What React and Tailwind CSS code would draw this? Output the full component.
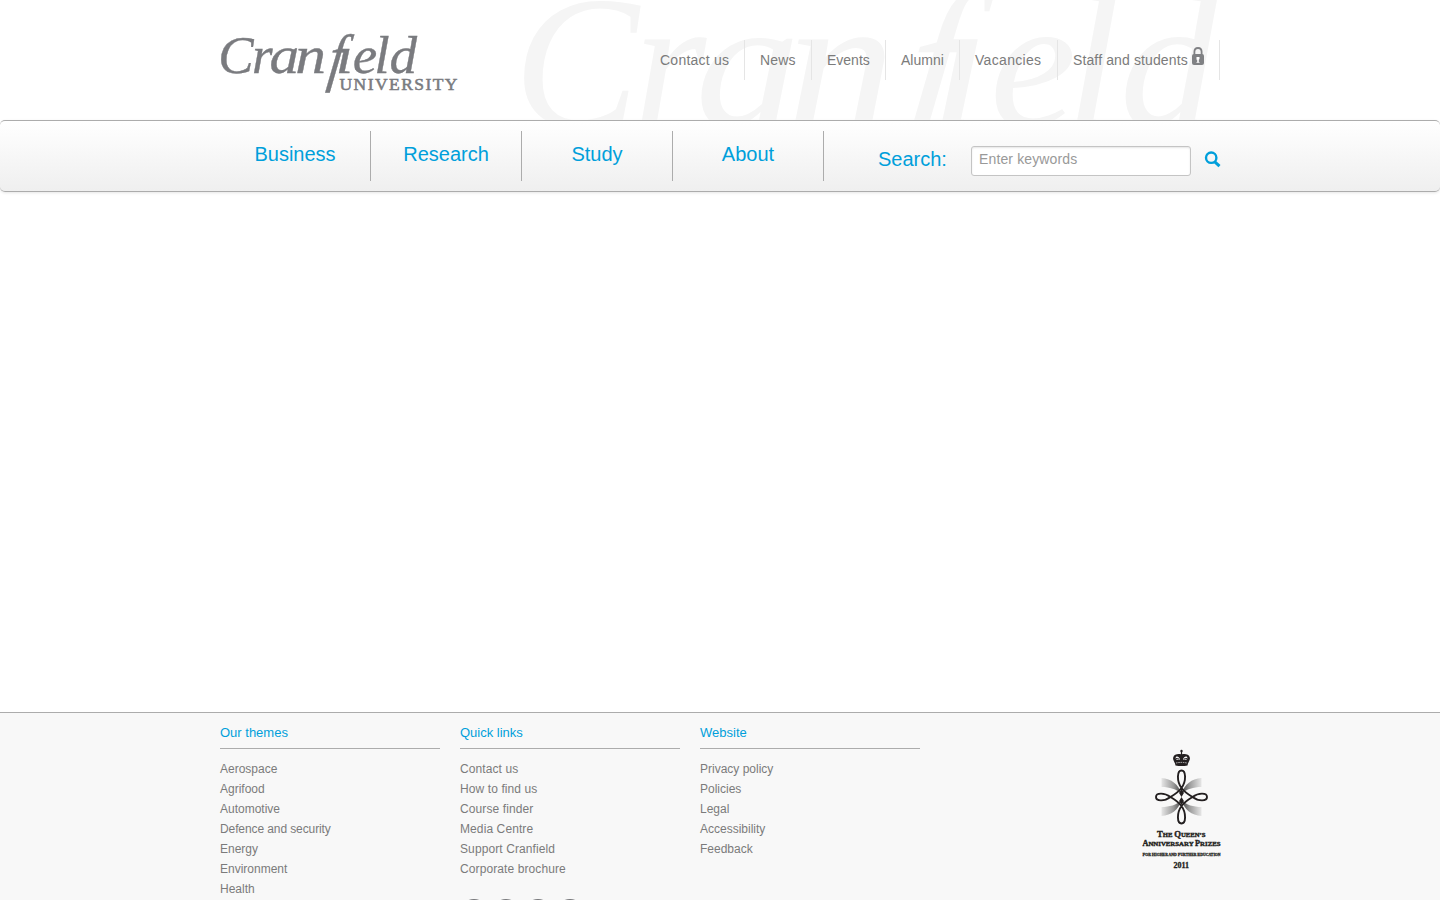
const TOP = [
  ['Contact us', 'w-[69px] tracking-[0.24px]'],
  ['News', 'w-[36px] tracking-[0.2px]'],
  ['Events', 'w-[43px]'],
  ['Alumni', 'w-[43px]'],
  ['Vacancies', 'w-[67px] tracking-[0.32px]'],
];
const MAIN = ['Business', 'Research', 'Study', 'About'];
const COLUMNS = [
  ['Our themes', ['Aerospace', 'Agrifood', 'Automotive', 'Defence and security', 'Energy', 'Environment', 'Health']],
  ['Quick links', ['Contact us', 'How to find us', 'Course finder', 'Media Centre', 'Support Cranfield', 'Corporate brochure']],
  ['Website', ['Privacy policy', 'Policies', 'Legal', 'Accessibility', 'Feedback']],
];
const SERIF = "'Liberation Serif', serif";

// letter, x, baseline, horizontal stretch, font size, extra slant
const LETTERS = [
  ['C', -1.8, 73, 1, 53, 0],
  ['r', 32, 73, 1, 53, 0],
  ['a', 49.5, 73, 1.12, 53, 0],
  ['n', 75.3, 73, 1.16, 53, 0],
  ['f', 106.5, 78.8, 0.86, 64, -8],
  ['i', 115.5, 73, 1.2, 53, 0],
  ['e', 132.7, 73, 1.04, 53, 0],
  ['l', 154.2, 73, 1.05, 53, 0],
  ['d', 169.4, 73, 1.04, 53, 0],
];

function Wordmark({ id }) {
  return (
    <g fontFamily={SERIF} fontStyle="italic">
      <clipPath id={id}>
        <rect x="0" y="-25.500" width="40" height="40" />
      </clipPath>
      {LETTERS.map(([letter, x, y, stretch, size, slant]) => (
        <g key={letter} transform={`translate(${x} ${y}) skewX(${slant}) scale(${stretch} 1)`}>
          <text fontSize={size} clipPath={letter === 'i' ? `url(#${id})` : undefined}>{letter}</text>
        </g>
      ))}
    </g>
  );
}

function Watermark() {
  return (
    <svg className="pointer-events-none absolute left-[300px] top-0" width="720" height="120" viewBox="0 0 720 120" fill="#f5f5f5" aria-hidden="true">
      <g transform="translate(0 -132.4) scale(3.54)">
        <Wordmark id="dot-large" />
      </g>
    </svg>
  );
}

function Logo() {
  return (
    <svg width="240" height="120" viewBox="0 0 240 120" fill="#7a7b7f">
      <g stroke="#7a7b7f" strokeWidth="0.35">
        <Wordmark id="dot-small" />
        <text x="119.500" y="90" textLength="118" lengthAdjust="spacing" fontFamily={SERIF} fontSize="17.500" strokeWidth="0.550">
          UNIVERSITY
        </text>
      </g>
    </svg>
  );
}

function Lock() {
  return (
    <svg className="-mr-px ml-auto mt-[7px]" width="14" height="18" viewBox="0 0 14 18">
      <path d="M3.400 8V4.800C3.400 2.300 5 1 7 1s3.600 1.300 3.600 3.800V8" fill="none" stroke="#808184" strokeWidth="1.800" />
      <rect x="1" y="7" width="12" height="11" rx="2" fill="#808184" />
      <path d="M5.500 10h3v2l-.7.7V15h.7v.8h-3V15h.7v-2.300h-.7z" fill="#fff" />
    </svg>
  );
}

function Crest() {
  return (
    <svg width="79" height="124" viewBox="0 0 79 124" fill="#231f20">
      <defs>
        <linearGradient id="sweep" x1="0" x2="1">
          <stop offset="0" stopColor="#e6e6e6" />
          <stop offset="0.600" stopColor="#9a9a9a" />
          <stop offset="1" stopColor="#444444" />
        </linearGradient>
        <path id="ray" d="M-20 -19C-10 -18 -3 -13 0 -3C-5 -8 -12 -10 -20 -10z" fill="url(#sweep)" />
      </defs>
      <g transform="translate(39.500 0)">
        <circle cy="5" r="1.200" />
        <path d="M-.6 5h1.200v4h-1.200z" />
        <path d="M-6 19.500C-6.500 16-9 14-8.300 11.500C-7.500 8-3 7.500 0 8.500C3 7.500 7.500 8 8.300 11.500C9 14 6.500 16 6 19.500Q0 20.500-6 19.500z" />
        <path d="M-4.500 14C-6.500 12.500-6 11-5 10.500S-2 11-1.500 13.500zM4.500 14C6.500 12.500 6 11 5 10.500S2 11 1.500 13.500z" fill="#f8f8f8" />
        <path d="M-5.500 12.500l3 .5M5.500 12.500l-3 .5" stroke="#231f20" strokeWidth="1" />
        <path d="M-5.500 17Q0 15.800 5.500 17" fill="none" stroke="#f8f8f8" strokeWidth="0.700" strokeDasharray="1.500 0.800" />
      </g>
      <g transform="translate(39.500 51)">
        <use href="#ray" />
        <use href="#ray" transform="scale(-1 1)" />
        <use href="#ray" transform="scale(1 -1)" />
        <use href="#ray" transform="scale(-1 -1)" />
        <path
          d="M0-9C-5-16-4.500-26.500 0-26.500S5-16 0-9C-3-5-6-3-11 0C-17 4.500-25.500 4.500-25.500 0S-17-4.500-11 0C-6 3-3 5 0 9C5 16 4.500 26.500 0 26.500S-5 16 0 9C3 5 6 3 11 0C17-4.500 25.500-4.500 25.500 0S17 4.500 11 0C6-3 3-5 0-9z"
          fill="none"
          stroke="#231f20"
          strokeWidth="1.900"
        />
        <path d="M0-8l2.400 4L0 0l-2.400-4zM0 8l2.400-4L0 0l-2.400 4z" />
      </g>
      <g fontFamily={SERIF} fontWeight="bold" stroke="#231f20" strokeWidth="0.400">
        <text x="15" y="90.500" fontSize="9" textLength="48.500" lengthAdjust="spacingAndGlyphs">T<tspan fontSize="7">HE </tspan>Q<tspan fontSize="7">UEEN’S</tspan></text>
        <text x="0.500" y="100" fontSize="8.500" textLength="78" lengthAdjust="spacingAndGlyphs">A<tspan fontSize="7">NNIVERSARY </tspan>P<tspan fontSize="7">RIZES</tspan></text>
        <text x="0.500" y="109.500" fontSize="5" textLength="78" lengthAdjust="spacingAndGlyphs" strokeWidth="0.300">F<tspan fontSize="4.200">OR </tspan>H<tspan fontSize="4.200">IGHER AND </tspan>F<tspan fontSize="4.200">URTHER </tspan>E<tspan fontSize="4.200">DUCATION</tspan></text>
        <text x="31.500" y="122.300" fontSize="8" textLength="15.500" strokeWidth="0.300">2011</text>
      </g>
    </svg>
  );
}

export default function App() {
  return (
    <div className="flex h-[900px] flex-col overflow-hidden bg-white font-['Liberation_Sans',sans-serif] text-[#7b7b7b]">
      <header className="relative mx-auto flex h-[120px] w-[1000px] shrink-0 justify-between">
        <Watermark />
        <Logo />
        <nav className="relative mt-10 flex h-10 text-sm leading-10">
          {TOP.map(([label, style]) => (
            <a key={label} className="border-r border-[#e5e5e5] px-[15px] whitespace-nowrap">
              <span className={'block ' + style}>{label}</span>
            </a>
          ))}
          <a className="flex w-[162px] border-r border-[#e5e5e5] px-[15px] tracking-[0.12px] whitespace-nowrap">
            Staff and students
            <Lock />
          </a>
        </nav>
      </header>

      <div className="h-[72px] shrink-0 rounded-[5px] border-y border-[#acacac] bg-linear-to-b from-white to-[#efefef] shadow-[0_1px_3px_rgba(0,0,0,0.1)]">
        <div className="mx-auto flex w-[1000px] text-[20px] text-[#009fdb]">
          {MAIN.map((label) => (
            <a key={label} className="mt-[10px] h-[50px] w-[151px] shrink-0 border-r border-[#acacac] text-center leading-[47px]">
              {label}
            </a>
          ))}
          <form className="flex flex-1 pl-[54px]">
            <label className="w-[93px] shrink-0 pt-[9px] leading-[58px]">Search:</label>
            <input
              className="mt-[25px] h-[30px] w-[220px] shrink-0 rounded-[3px] border border-[#c4c4c4] bg-white px-[7px] pb-1 text-sm tracking-[0.13px] shadow-[inset_0_1px_2px_rgba(0,0,0,0.1)] placeholder:text-[#999999]"
              placeholder="Enter keywords"
            />
            <svg className="ml-[13px] mt-[30px] shrink-0" width="17" height="17" viewBox="0 0 17 17" fill="none" stroke="#009fdb">
              <circle cx="7.200" cy="6.700" r="5.200" strokeWidth="2.400" />
              <path d="M10.800 10.800l4.700 4.400" strokeWidth="3" />
            </svg>
          </form>
        </div>
      </div>

      <main className="h-[520px] shrink-0" />

      <footer className="h-[188px] shrink-0 overflow-hidden border-t border-[#acacac] bg-[#f8f8f8]">
        <div className="mx-auto flex w-[1002px] gap-5 pl-px">
          {COLUMNS.map(([title, links]) => (
            <section key={title} className="w-[220px] shrink-0">
              <h2 className="h-9 border-b border-[#acacac] text-[13px] leading-[39px] text-[#009fdb]">{title}</h2>
              <ul className={'mt-[10px] text-xs leading-5 ' + (title === 'Quick links' ? 'tracking-[0.1px]' : '')}>
                {links.map((link) => (
                  <li key={link} className={link.startsWith('Defence') ? 'tracking-[-0.1px]' : ''}>{link}</li>
                ))}
              </ul>
              {title === 'Quick links' && (
                <div className="mt-5 flex gap-1">
                  {['facebook', 'twitter', 'linkedin', 'youtube'].map((name) => (
                    <span key={name} className="h-7 w-7 rounded-full bg-[#77787b]" />
                  ))}
                </div>
              )}
            </section>
          ))}
          <div className="ml-auto mt-[33px]">
            <Crest />
          </div>
        </div>
      </footer>
    </div>
  );
}
